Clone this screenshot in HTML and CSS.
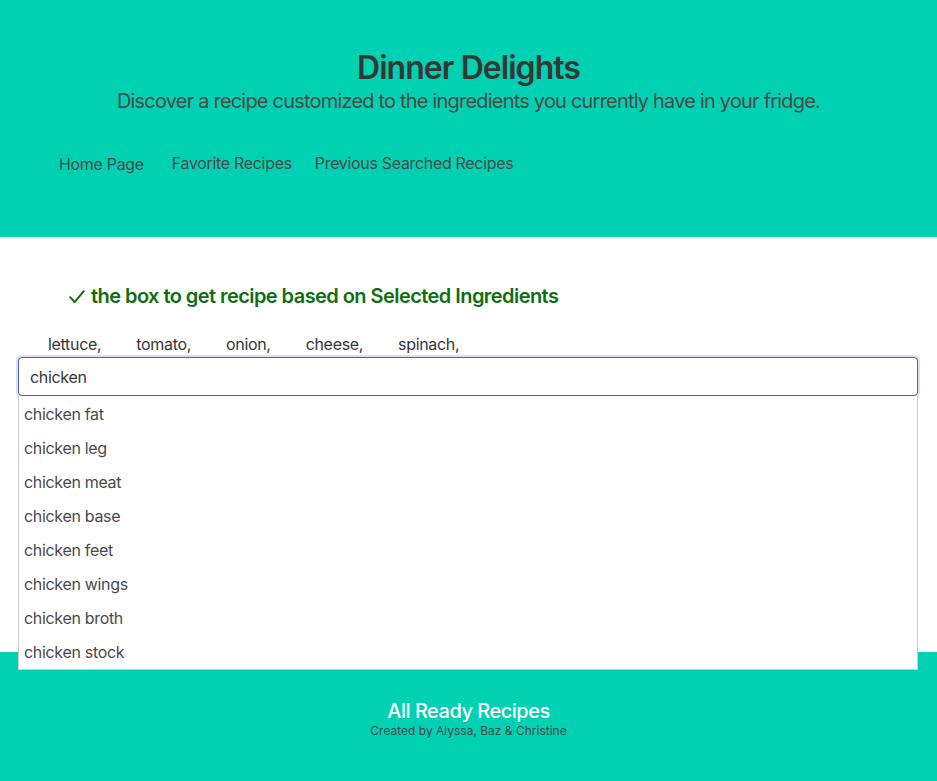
FILE: index.html
```html
<!DOCTYPE html>
<html lang="en">
<head>
<meta charset="utf-8">
<title>Dinner Delights</title>
<link rel="stylesheet" href="styles.css">
</head>
<body>
<header class="hero">
  <h1 class="title">Dinner Delights</h1>
  <p class="subtitle">Discover a recipe customized to the ingredients you currently have in your fridge.</p>
  <nav class="nav">
    <a class="nav-link home" href="#">Home Page</a>
    <a class="nav-link fav" href="#">Favorite Recipes</a>
    <a class="nav-link" href="#">Previous Searched Recipes</a>
  </nav>
</header>
<main class="main">
  <h2 class="hint"><svg class="check" width="16" height="14" viewBox="0 0 16 14" aria-hidden="true"><polyline points="1.2,7.2 5.6,12.2 14.8,1.2" fill="none" stroke="#0f6e12" stroke-width="2" stroke-linecap="round" stroke-linejoin="round"/></svg>the box to get recipe based on Selected Ingredients</h2>
  <ul class="ingredients">
    <li>lettuce,</li>
    <li>tomato,</li>
    <li>onion,</li>
    <li>cheese,</li>
    <li>spinach,</li>
  </ul>
  <div class="search">
    <input class="search-input" type="text" value="chicken" autofocus>
    <ul class="suggestions">
      <li>chicken fat</li>
      <li>chicken leg</li>
      <li>chicken meat</li>
      <li>chicken base</li>
      <li>chicken feet</li>
      <li>chicken wings</li>
      <li>chicken broth</li>
      <li>chicken stock</li>
    </ul>
  </div>
</main>
<footer class="footer">
  <p class="footer-title">All Ready Recipes</p>
  <p class="footer-sub">Created by Alyssa, Baz &amp; Christine</p>
</footer>
</body>
</html>
```
FILE: styles.css
```css
* { box-sizing: border-box; }
body {
  margin: 0;
  font-family: Inter, "Noto Sans", "Liberation Sans", sans-serif;
  letter-spacing: -0.02em;
  color: #4a4a4a;
  background: #fff;
}
.hero {
  background: #00d1b2;
  height: 237px;
  padding: 50px 24px 0;
  text-align: center;
}
.title {
  margin: 0;
  font-size: 32px;
  line-height: 36px;
  font-weight: 600;
  letter-spacing: -0.03em;
  color: #363636;
}
.subtitle {
  margin: 3px 0 0;
  font-size: 20px;
  line-height: 25px;
  letter-spacing: -0.04em;
  color: #4a4a4a;
}
.nav {
  display: flex;
  margin-top: 37px;
  padding-left: 35px;
  text-align: left;
}
.nav-link {
  font-size: 16px;
  line-height: 24px;
  color: #4a4a4a;
  text-decoration: none;
  margin-right: 23px;
}
.nav-link.home { margin-right: 28px; transform: translateY(1px); }
.main {
  position: relative;
  height: 415px;
  padding-top: 46px;
}
.hint {
  display: flex;
  align-items: center;
  gap: 6px;
  margin: 0 0 0 69px;
  font-size: 20px;
  line-height: 26px;
  font-weight: 600;
  letter-spacing: -0.028em;
  color: #0f6e12;
}
.check { flex: none; margin-top: 1px; }
.ingredients {
  list-style: none;
  margin: 25px 0 0;
  padding: 0 0 0 48px;
  display: flex;
  gap: 35px;
  font-size: 16px;
  line-height: 20px;
  color: #363636;
}
.search {
  position: relative;
  margin: 3px 19px 0 18px;
}
.search-input {
  display: block;
  width: 100%;
  height: 39px;
  padding: 0 11px;
  font-family: inherit;
  font-size: 16px;
  letter-spacing: -0.02em;
  color: #363636;
  border: 1px solid #485fc7;
  border-radius: 4px;
  box-shadow: 0 0 0 2px rgba(72, 95, 199, 0.2);
  outline: none;
}
.suggestions {
  position: absolute;
  left: 0;
  right: 0;
  top: 39px;
  z-index: 2;
  margin: 0;
  padding: 1px 0 0;
  list-style: none;
  background: #fff;
  border: 1px solid #cccccc;
  border-top: none;
}
.suggestions li {
  padding: 0 5px;
  height: 34px;
  line-height: 34px;
  font-size: 16px;
  color: #4a4a4a;
}
.footer {
  background: #00d1b2;
  padding: 47px 24px 96px;
  text-align: center;
}
.footer-title {
  margin: 0;
  font-size: 20px;
  line-height: 24px;
  font-weight: 500;
  letter-spacing: -0.025em;
  color: #fff;
}
.footer-sub {
  margin: 0;
  font-size: 12px;
  line-height: 15px;
  letter-spacing: 0;
  color: #4a4a4a;
}
```
